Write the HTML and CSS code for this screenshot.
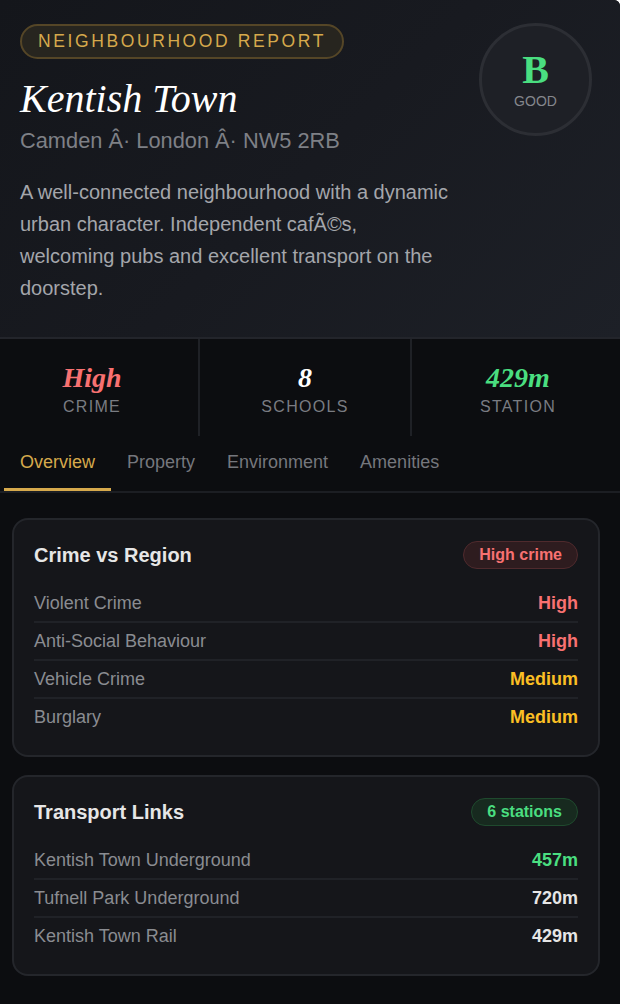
FILE: index.html
```html
<!DOCTYPE html>
<html lang="en">
<head>
<meta charset="utf-8">
<title>Kentish Town – Neighbourhood Report</title>
<link rel="stylesheet" href="styles.css">
</head>
<body>
<div class="page">
  <header class="hero">
    <span class="tag">NEIGHBOURHOOD REPORT</span>
    <h1 class="title">Kentish Town</h1>
    <p class="location">Camden Â· London Â· NW5 2RB</p>
    <p class="desc">A well-connected neighbourhood with a dynamic urban character. Independent cafÃ©s, welcoming pubs and excellent transport on the doorstep.</p>
    <div class="grade">
      <span class="grade-letter">B</span>
      <span class="grade-label">GOOD</span>
    </div>
  </header>

  <section class="stats">
    <div class="stat stat-first">
      <span class="stat-value red">High</span>
      <span class="stat-label">CRIME</span>
    </div>
    <div class="stat stat-mid">
      <span class="stat-value white">8</span>
      <span class="stat-label">SCHOOLS</span>
    </div>
    <div class="stat stat-last">
      <span class="stat-value green">429m</span>
      <span class="stat-label">STATION</span>
    </div>
  </section>

  <nav class="tabs">
    <span class="tab active">Overview</span>
    <span class="tab">Property</span>
    <span class="tab">Environment</span>
    <span class="tab">Amenities</span>
  </nav>

  <section class="card">
    <div class="card-head">
      <h2 class="card-title">Crime vs Region</h2>
      <span class="pill pill-red">High crime</span>
    </div>
    <ul class="rows">
      <li class="row"><span class="row-label">Violent Crime</span><span class="row-value red">High</span></li>
      <li class="row"><span class="row-label">Anti-Social Behaviour</span><span class="row-value red">High</span></li>
      <li class="row"><span class="row-label">Vehicle Crime</span><span class="row-value amber">Medium</span></li>
      <li class="row"><span class="row-label">Burglary</span><span class="row-value amber">Medium</span></li>
    </ul>
  </section>

  <section class="card">
    <div class="card-head">
      <h2 class="card-title">Transport Links</h2>
      <span class="pill pill-green">6 stations</span>
    </div>
    <ul class="rows">
      <li class="row"><span class="row-label">Kentish Town Underground</span><span class="row-value green">457m</span></li>
      <li class="row"><span class="row-label">Tufnell Park Underground</span><span class="row-value light">720m</span></li>
      <li class="row"><span class="row-label">Kentish Town Rail</span><span class="row-value light">429m</span></li>
    </ul>
  </section>
</div>
</body>
</html>
```

FILE: styles.css
```css
* { box-sizing: border-box; }

html { background: #ffffff; }

body {
  margin: 0;
  font-family: "Liberation Sans", Arial, Helvetica, sans-serif;
  color: #e6e6e6;
}

.page {
  min-height: 1004px;
  background: #0c0d10;
  border-top-right-radius: 6px;
  overflow: hidden;
  padding-bottom: 30px;
}

/* ---------- hero ---------- */
.hero {
  position: relative;
  padding: 24px 20px 33px;
  background: linear-gradient(135deg, #14161b 0%, #181a20 50%, #1d2027 100%);
  border-bottom: 2px solid #23252b;
}

.tag {
  display: inline-block;
  height: 35px;
  padding: 0 16px 0 16px;
  border: 2px solid #554627;
  border-radius: 18px;
  background: #27251f;
  color: #d6a94c;
  font-size: 17.5px;
  line-height: 31px;
  letter-spacing: 2.6px;
}

.title {
  margin: 17px 0 0;
  font-family: "Liberation Serif", "Times New Roman", serif;
  font-style: italic;
  font-weight: 400;
  font-size: 40px;
  line-height: 46px;
  color: #ffffff;
}

.location {
  margin: 5px 0 0;
  font-size: 21.8px;
  line-height: 28px;
  color: #7e8086;
}

.desc {
  margin: 21px 0 0;
  max-width: 432px;
  font-size: 20px;
  line-height: 32px;
  color: #a4a6ab;
}

.grade {
  position: absolute;
  top: 23px;
  right: 28px;
  width: 113px;
  height: 113px;
  border: 3px solid #2c2e34;
  border-radius: 50%;
  background: #1e2026;
  display: flex;
  flex-direction: column;
  align-items: center;
  justify-content: center;
}

.grade-letter {
  font-family: "Liberation Serif", "Times New Roman", serif;
  font-weight: 700;
  font-size: 40px;
  line-height: 40px;
  color: #4ade80;
}

.grade-label {
  margin-top: 3px;
  font-size: 14px;
  line-height: 16px;
  color: #85878d;
}

/* ---------- stats ---------- */
.stats {
  display: grid;
  grid-template-columns: 200px 212px 1fr;
  background: #0c0d10;
}

.stat {
  display: flex;
  flex-direction: column;
  align-items: center;
  padding: 23px 0 19px;
}

.stat-first { border-right: 2px solid #1f2126; padding-right: 14px; }
.stat-mid { border-right: 2px solid #1f2126; }
.stat-last { padding-left: 4px; }

.stat-value {
  font-family: "Liberation Serif", "Times New Roman", serif;
  font-style: italic;
  font-weight: 700;
  font-size: 28px;
  line-height: 32px;
}

.stat-label {
  margin-top: 3px;
  font-size: 16px;
  line-height: 20px;
  letter-spacing: 1.3px;
  color: #7a7c82;
}

/* ---------- tabs ---------- */
.tabs {
  display: flex;
  padding-left: 4px;
  border-bottom: 2px solid #1c1e23;
}

.tab {
  padding: 0 16px;
  height: 55px;
  line-height: 52px;
  font-size: 18px;
  color: #75777d;
  border-bottom: 3px solid transparent;
}

.tab.active {
  color: #d6a94c;
  border-bottom-color: #d6a94c;
}

/* ---------- cards ---------- */
.card {
  margin: 25px 20px 0 12px;
  padding: 21px 20px 20px;
  background: #15161a;
  border: 2px solid #24262b;
  border-radius: 16px;
}

.card + .card { margin-top: 18px; }

.card-head {
  display: flex;
  align-items: center;
  justify-content: space-between;
  height: 28px;
}

.card-title {
  margin: 0;
  font-size: 20px;
  font-weight: 700;
  color: #e6e6e6;
}

.pill {
  height: 28px;
  padding: 0 15px;
  border-radius: 14px;
  font-size: 16px;
  font-weight: 700;
  line-height: 25px;
  border: 1.5px solid;
}

.pill-red {
  background: #2e1c1f;
  border-color: #4f2a2d;
  color: #f87171;
}

.pill-green {
  background: #172a1f;
  border-color: #1f4a2e;
  color: #4ade80;
}

.rows {
  list-style: none;
  margin: 16px 0 0;
  padding: 0;
}

.row {
  display: flex;
  justify-content: space-between;
  align-items: center;
  height: 38px;
  border-bottom: 2px solid #202227;
  font-size: 18px;
}

.row:last-child {
  height: 36px;
  border-bottom: none;
}

.row-label { color: #8a8c91; }
.row-value { font-weight: 700; }

.red { color: #f87171; }
.amber { color: #fbbf24; }
.green { color: #4ade80; }
.white { color: #ffffff; }
.light { color: #e6e6e6; }
```
